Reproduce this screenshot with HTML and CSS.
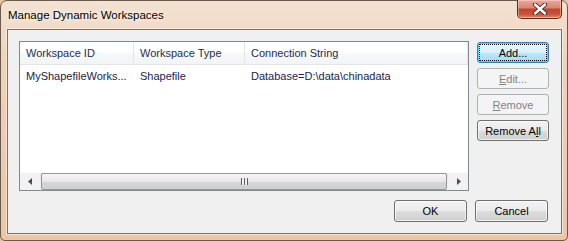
FILE: index.html
```html
<!DOCTYPE html>
<html lang="en">
<head>
    <meta charset="UTF-8">
    <title>Manage Dynamic Workspaces</title>
    <link rel="stylesheet" href="styles.css">
</head>
<body>
    <div class="window">
        <div class="titlebar">
            <span class="title">Manage Dynamic Workspaces</span>
            <div class="close">
                <svg width="16" height="12" viewBox="0 0 16 12">
                    <path d="M3 1.5 L13 10.5 M13 1.5 L3 10.5" stroke="#3a2420" stroke-width="4.2" stroke-linecap="round"/>
                    <path d="M3 1.5 L13 10.5 M13 1.5 L3 10.5" stroke="#ffffff" stroke-width="2.4" stroke-linecap="round"/>
                </svg>
            </div>
        </div>

        <div class="client">
            <div class="main">
                <div class="listview">
                    <div class="lv-header">
                        <div class="col c1">Workspace ID</div>
                        <div class="col c2">Workspace Type</div>
                        <div class="col c3">Connection String</div>
                    </div>
                    <div class="lv-row">
                        <div class="col c1">MyShapefileWorks...</div>
                        <div class="col c2">Shapefile</div>
                        <div class="col c3">Database=D:\data\chinadata</div>
                    </div>
                    <div class="lv-fill"></div>
                    <div class="hscroll">
                        <div class="sb-arrow">
                            <svg width="5" height="7" viewBox="0 0 5 7"><path d="M4 0 L0 3.5 L4 7 Z" fill="#4d4d4d"/></svg>
                        </div>
                        <div class="sb-thumb">
                            <span class="grip"></span>
                        </div>
                        <div class="sb-arrow">
                            <svg width="5" height="7" viewBox="0 0 5 7"><path d="M1 0 L5 3.5 L1 7 Z" fill="#4d4d4d"/></svg>
                        </div>
                    </div>
                </div>

                <div class="side-buttons">
                    <button class="btn default"><span class="focus">Add...</span></button>
                    <button class="btn" disabled><u>E</u>dit...</button>
                    <button class="btn" disabled><u>R</u>emove</button>
                    <button class="btn">Remove A<u>l</u>l</button>
                </div>
            </div>

            <div class="footer">
                <button class="btn">OK</button>
                <button class="btn">Cancel</button>
            </div>
        </div>
    </div>
</body>
</html>
```

FILE: styles.css
```css
body {
    margin: 0;
    background: #e8c3a2;
    font-family: "Liberation Sans", Arial, sans-serif;
}
.window {
    width: 568px;
    height: 241px;
    box-sizing: border-box;
    border: 1px solid #6b5a4c;
    border-radius: 7px 7px 5px 5px;
    background: linear-gradient(to bottom, #f3e2d2 0%, #eed3ba 25%, #eac6a5 100%);
    padding: 0 5px 6px 6px;
    display: flex;
    flex-direction: column;
}
.titlebar {
    height: 28px;
    display: flex;
    align-items: flex-start;
    justify-content: space-between;
}
.title {
    margin-top: 8px;
    margin-left: 1px;
    font-family: "Liberation Sans", Arial, sans-serif;
    font-size: 11.5px;
    color: #000;
    text-shadow: 0 0 6px #fff8ef, 0 0 3px #fff8ef;
}
.close {
    width: 45px;
    height: 19px;
    margin-top: -1px;
    box-sizing: border-box;
    border: 1px solid #5a2a20;
    border-top: none;
    border-radius: 0 0 5px 5px;
    background: linear-gradient(to bottom, #e9a99a 0%, #d98472 45%, #c0432a 50%, #c9553c 80%, #e08a6c 100%);
    box-shadow: inset 0 0 0 1px rgba(255, 230, 220, 0.45);
    display: flex;
    align-items: center;
    justify-content: center;
}
.client {
    flex: 1;
    box-sizing: border-box;
    border: 1px solid #7a6e66;
    box-shadow: 0 0 0 1px rgba(255, 248, 240, 0.6);
    background: #f0f0f0;
    padding: 11px 13px 11px 11px;
    display: flex;
    flex-direction: column;
}
.main {
    display: flex;
    gap: 8px;
}
.listview {
    width: 450px;
    height: 150px;
    box-sizing: border-box;
    border: 1px solid #828790;
    background: #fff;
    display: flex;
    flex-direction: column;
    font-size: 11px;
}
.lv-header {
    height: 23px;
    display: flex;
    box-sizing: border-box;
    border-bottom: 1px solid #e5e5e5;
    background: linear-gradient(to bottom, #ffffff 0%, #ffffff 50%, #f7f8f9 51%, #f3f4f6 100%);
    color: #1e2f4f;
}
.lv-header .col {
    border-right: 1px solid #e3e6ea;
}
.col {
    box-sizing: border-box;
    padding-left: 6px;
    display: flex;
    align-items: center;
    white-space: nowrap;
}
.c1 {
    width: 114px;
}
.c2 {
    width: 111px;
}
.c3 {
    width: 223px;
}
.lv-row {
    height: 21px;
    display: flex;
    color: #1b2447;
}
.lv-fill {
    flex: 1;
}
.hscroll {
    height: 17px;
    display: flex;
    background: linear-gradient(to bottom, #e6e6e6, #f3f3f3);
}
.sb-arrow {
    width: 20px;
    display: flex;
    align-items: center;
    justify-content: center;
    background: #f2f2f2;
}
.sb-thumb {
    flex: 1;
    margin: 0 1px;
    box-sizing: border-box;
    border: 1px solid #979797;
    border-radius: 2px;
    background: linear-gradient(to bottom, #f5f5f5 0%, #e8e8e8 50%, #d7d7d7 51%, #cfcfcf 100%);
    display: flex;
    align-items: center;
    justify-content: center;
}
.grip {
    width: 7px;
    height: 7px;
    background: repeating-linear-gradient(to right, #5f5f5f 0, #5f5f5f 1px, #f2f2f2 1px, #f2f2f2 3px);
}
.side-buttons {
    margin-top: 1px;
    display: flex;
    flex-direction: column;
    gap: 5px;
}
.btn {
    width: 72px;
    height: 21px;
    padding: 0;
    box-sizing: border-box;
    border: 1px solid #707070;
    border-radius: 3px;
    background: linear-gradient(to bottom, #f2f2f2 0%, #ebebeb 50%, #dddddd 51%, #cfcfcf 100%);
    box-shadow: inset 0 0 0 1px rgba(255, 255, 255, 0.7);
    font-family: "Liberation Sans", Arial, sans-serif;
    font-size: 11px;
    color: #000;
}
.btn u {
    text-decoration: underline;
}
.btn.default {
    border-color: #3c7fb1;
    box-shadow: inset 0 0 0 1px #48d7fb;
    background: linear-gradient(to bottom, #eaf6fd 0%, #d9f0fc 50%, #bee6fd 51%, #a7d9f5 100%);
    display: flex;
    padding: 2px;
}
.focus {
    flex: 1;
    display: flex;
    align-items: center;
    justify-content: center;
    outline: 1px dotted #000;
}
.btn:disabled {
    border-color: #adb2b5;
    background: #f4f4f4;
    box-shadow: none;
    color: #838383;
}
.footer {
    margin-top: 9px;
    display: flex;
    justify-content: flex-end;
    gap: 8px;
}
.footer .btn {
    width: 73px;
    height: 22px;
}
```
